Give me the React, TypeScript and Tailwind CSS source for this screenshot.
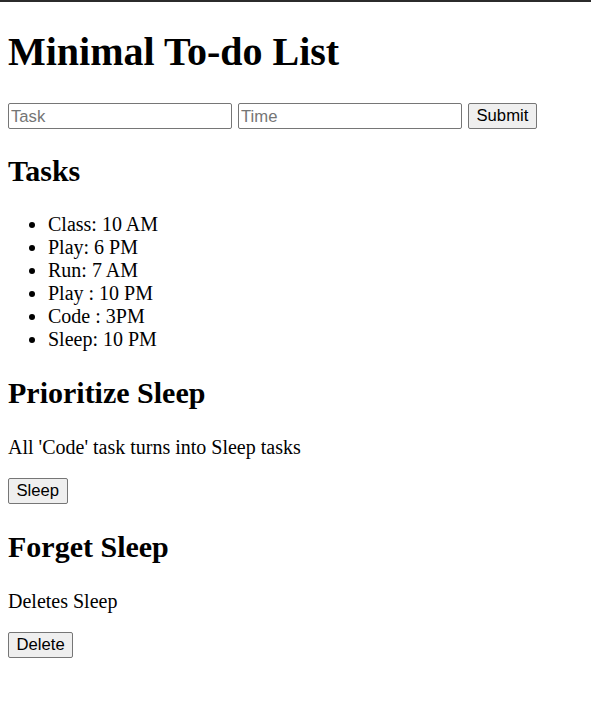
const tasks = [
  "Class: 10 AM",
  "Play: 6 PM",
  "Run: 7 AM",
  "Play : 10 PM",
  "Code : 3PM",
  "Sleep: 10 PM",
];

const controlFont = "font-['Liberation_Sans',Arial,sans-serif] text-[16.67px]";

function Button({ label }: { label: string }) {
  return (
    <button
      type="button"
      className={`${controlFont} h-[26px] px-[7.5px] pt-[1px] leading-none text-black bg-[#efefef] border border-[#767676] rounded-[2px]`}
    >
      {label}
    </button>
  );
}

export default function App() {
  return (
    <div className="min-h-screen bg-white text-black font-['Liberation_Serif','Times_New_Roman',serif]">
      <div className="h-[2px] bg-[#2b2b2b]" />
      <div className="px-2">
        <h1 className="mt-[27px] text-[40px] font-bold leading-[46px]">Minimal To-do List</h1>

        <form className="mt-[28px] flex items-center gap-[6px]" onSubmit={(e) => e.preventDefault()}>
          <input
            placeholder="Task"
            className={`${controlFont} w-[224px] h-[26px] px-[2px] pt-[1px] border border-[#767676] rounded-[2px] placeholder:text-[#757575]`}
          />
          <input
            placeholder="Time"
            className={`${controlFont} w-[224px] h-[26px] px-[2px] pt-[1px] border border-[#767676] rounded-[2px] placeholder:text-[#757575]`}
          />
          <Button label="Submit" />
        </form>

        <h2 className="mt-[25px] text-[30px] font-bold leading-[34.5px]">Tasks</h2>
        <ul className="mt-[24px] list-disc pl-10 text-[20px] leading-[23px]">
          {tasks.map((t) => (
            <li key={t}>{t}</li>
          ))}
        </ul>

        <h2 className="mt-[25px] text-[30px] font-bold leading-[34.5px]">Prioritize Sleep</h2>
        <p className="mt-[25.5px] text-[20px] leading-[23px]">All 'Code' task turns into Sleep tasks</p>
        <div className="mt-[19.5px] flex">
          <Button label="Sleep" />
        </div>

        <h2 className="mt-[26px] text-[30px] font-bold leading-[34.5px]">Forget Sleep</h2>
        <p className="mt-[25px] text-[20px] leading-[23px]">Deletes Sleep</p>
        <div className="mt-[19.5px] flex">
          <Button label="Delete" />
        </div>
      </div>
    </div>
  );
}
